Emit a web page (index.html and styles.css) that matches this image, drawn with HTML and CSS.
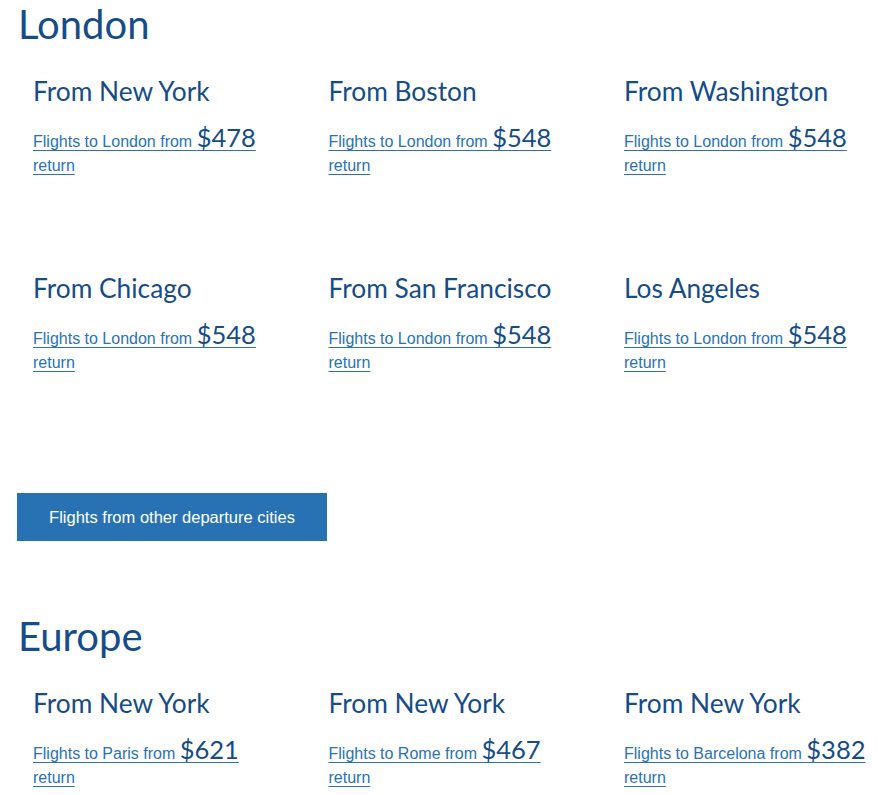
FILE: index.html
```html
<!DOCTYPE html>
<html lang="en">
<head>
<meta charset="utf-8">
<title>Flights</title>
<link rel="stylesheet" href="styles.css">
</head>
<body>
<div class="page">
  <section class="region">
    <h2 class="region-title">London</h2>
    <div class="deals">
      <div class="deal">
        <h3 class="deal-from">From New York</h3>
        <a class="deal-link" href="#">Flights to London from <span class="price">$478</span><br>return</a>
      </div>
      <div class="deal">
        <h3 class="deal-from">From Boston</h3>
        <a class="deal-link" href="#">Flights to London from <span class="price">$548</span><br>return</a>
      </div>
      <div class="deal">
        <h3 class="deal-from">From Washington</h3>
        <a class="deal-link" href="#">Flights to London from <span class="price">$548</span><br>return</a>
      </div>
      <div class="deal">
        <h3 class="deal-from">From Chicago</h3>
        <a class="deal-link" href="#">Flights to London from <span class="price">$548</span><br>return</a>
      </div>
      <div class="deal">
        <h3 class="deal-from">From San Francisco</h3>
        <a class="deal-link" href="#">Flights to London from <span class="price">$548</span><br>return</a>
      </div>
      <div class="deal">
        <h3 class="deal-from">Los Angeles</h3>
        <a class="deal-link" href="#">Flights to London from <span class="price">$548</span><br>return</a>
      </div>
    </div>
    <a class="btn" href="#">Flights from other departure cities</a>
  </section>
  <section class="region">
    <h2 class="region-title">Europe</h2>
    <div class="deals">
      <div class="deal">
        <h3 class="deal-from">From New York</h3>
        <a class="deal-link" href="#">Flights to Paris from <span class="price">$621</span><br>return</a>
      </div>
      <div class="deal">
        <h3 class="deal-from">From New York</h3>
        <a class="deal-link" href="#">Flights to Rome from <span class="price">$467</span><br>return</a>
      </div>
      <div class="deal">
        <h3 class="deal-from">From New York</h3>
        <a class="deal-link" href="#">Flights to Barcelona from <span class="price">$382</span><br>return</a>
      </div>
    </div>
  </section>
</div>
</body>
</html>
```

FILE: styles.css
```css
html, body {
  margin: 0;
  padding: 0;
  background: #ffffff;
}

body {
  font-family: "Liberation Sans", Arial, sans-serif;
  overflow: hidden;
}

.page {
  padding: 0 0 0 18px;
}

.region-title {
  font-family: Lato, "Open Sans", sans-serif;
  font-weight: 400;
  font-size: 40px;
  line-height: 48px;
  color: #164c89;
  margin: 0;
}

.deals {
  display: grid;
  grid-template-columns: repeat(3, 295.5px);
  width: 886px;
}

.deal {
  padding: 28px 0 0 15px;
  height: 169px;
}

.deal-from {
  font-family: Lato, "Open Sans", sans-serif;
  font-weight: 400;
  font-size: 26.3px;
  line-height: 30px;
  color: #164c89;
  margin: 0 0 19px;
}

.deal-link {
  font-size: 16px;
  line-height: 24px;
  color: #2a72b5;
  text-decoration: underline;
  text-underline-offset: 3px;
}

.price {
  font-family: Lato, "Open Sans", sans-serif;
  font-size: 25.5px;
  color: #164c89;
}

.btn {
  display: inline-block;
  margin-top: 51px;
  margin-left: -1px;
  background: #2872b4;
  color: #ffffff;
  font-size: 16.5px;
  line-height: 48px;
  width: 310px;
  text-align: center;
  text-decoration: none;
}

.region + .region {
  margin-top: 71px;
}
```
